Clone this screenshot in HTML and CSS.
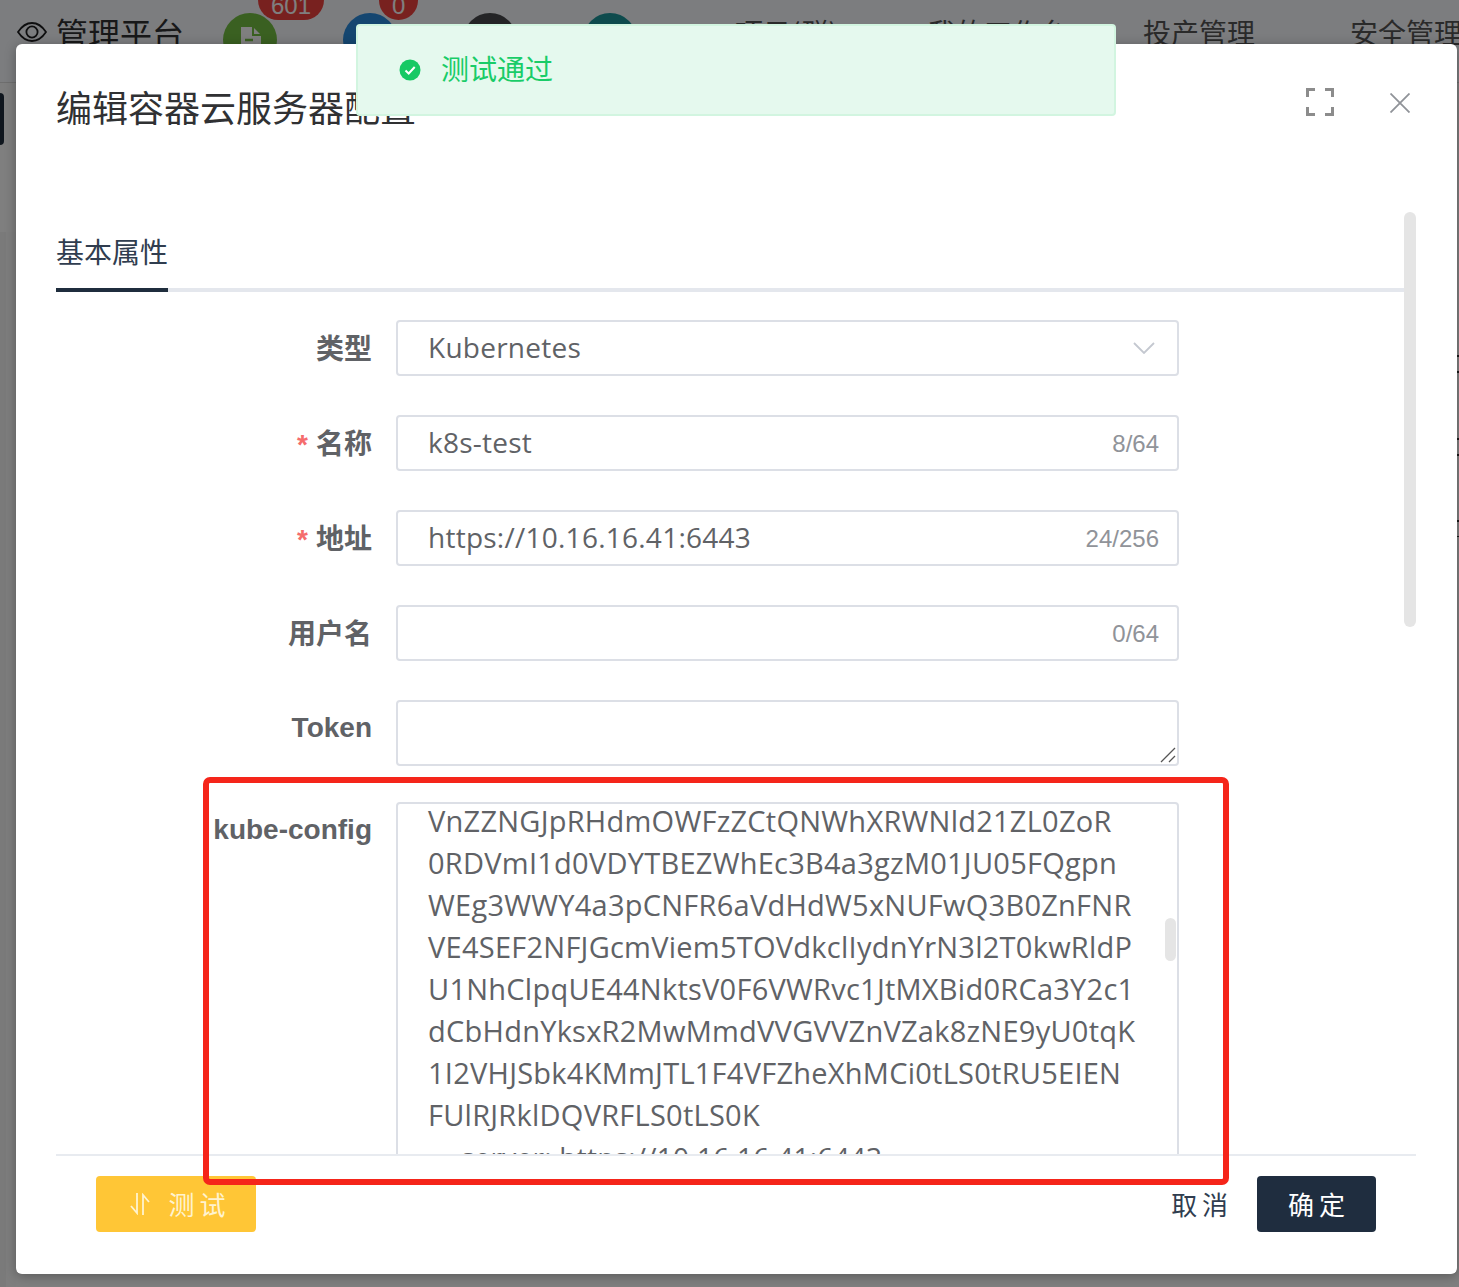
FILE: index.html
```html
<!DOCTYPE html>
<html lang="zh-CN">
<head>
<meta charset="utf-8">
<title>编辑容器云服务器配置</title>
<link rel="stylesheet" href="styles.css">
</head>
<body>
<div class="page">
  <header class="topbar">
    <div class="brand">
      <svg class="brand-eye" viewBox="0.500 0 29 20" width="30" height="20" aria-hidden="true"><path d="M1 10C5 4 10 1 15 1s10 3 14 9c-4 6-9 9-14 9S5 16 1 10z" fill="none" stroke="#1d1d1e" stroke-width="1.8"/><circle cx="15" cy="10" r="5.6" fill="none" stroke="#1d1d1e" stroke-width="1.8"/></svg>
      <span class="brand-name">管理平台</span>
    </div>
    <div class="quick">
      <div class="quick-item green">
        <svg class="doc" viewBox="0 0 22 28" width="22" height="28" aria-hidden="true"><path d="M1 0h12l8 8v20H1z" fill="#fff"/><path d="M13 0v8h8" fill="none" stroke="#74c043" stroke-width="2"/><path d="M5 13h8M5 19h12" stroke="#74c043" stroke-width="2.4"/></svg>
        <span class="badge wide">601</span>
      </div>
      <div class="quick-item blue"><span class="badge">0</span></div>
      <div class="quick-item slate"></div>
      <div class="quick-item teal"></div>
    </div>
    <nav class="nav">
      <span class="nav-item first">项目(群)</span>
      <span class="nav-item second">我的工作台</span>
      <span class="nav-item third">投产管理</span>
      <span class="nav-item">安全管理</span>
    </nav>
  </header>
  <div class="subbar"><span class="pill"></span></div>
  <div class="side"></div>
  <div class="table-edge"></div>
</div>

<div class="mask"></div>

<section class="modal">
  <div class="modal-head">
    <h1 class="modal-title">编辑容器云服务器配置</h1>
    <div class="modal-tools">
      <svg viewBox="0 0 28 28" width="28" height="28" aria-hidden="true"><path d="M1.5 9V1.500H9M19 1.500h7.500V9M1.500 19v7.500H9M19 26.500h7.500V19" fill="none" stroke="#8c8c8c" stroke-width="3"/></svg>
      <svg class="close" viewBox="0 0 20 20" width="20" height="20" aria-hidden="true"><path d="M0.500 0.500l19 19M19.500 0.500l-19 19" fill="none" stroke="#909399" stroke-width="1.800"/></svg>
    </div>
  </div>

  <div class="modal-body">
    <div class="scroll-thumb"></div>
    <div class="tabs"><span class="tab">基本属性</span></div>

    <div class="row">
      <div class="label">类型</div>
      <div class="field">
        <span class="value">Kubernetes</span>
        <svg class="chevron" viewBox="0 0 22 12" width="22" height="12" aria-hidden="true"><path d="M1 1l10 10L21 1" fill="none" stroke="#c4c8d0" stroke-width="1.800"/></svg>
      </div>
    </div>
    <div class="row">
      <div class="label"><span class="req">*</span>名称</div>
      <div class="field"><span class="value">k8s-test</span><span class="count">8/64</span></div>
    </div>
    <div class="row">
      <div class="label"><span class="req">*</span>地址</div>
      <div class="field"><span class="value">https://10.16.16.41:6443</span><span class="count">24/256</span></div>
    </div>
    <div class="row">
      <div class="label">用户名</div>
      <div class="field"><span class="value"></span><span class="count">0/64</span></div>
    </div>
    <div class="row row-token">
      <div class="label latin">Token</div>
      <div class="field area-small">
        <svg class="grip" viewBox="0 0 16 16" width="16" height="16" aria-hidden="true"><path d="M1 15L15 1M9 15l6-6" fill="none" stroke="#555" stroke-width="1.300"/></svg>
      </div>
    </div>
    <div class="row">
      <div class="label latin">kube-config</div>
      <div class="field area-large">
        <div class="code">
          <div class="code-line">VnZZNGJpRHdmOWFzZCtQNWhXRWNld21ZL0ZoR</div>
          <div class="code-line">0RDVmI1d0VDYTBEZWhEc3B4a3gzM01JU05FQgpn</div>
          <div class="code-line">WEg3WWY4a3pCNFR6aVdHdW5xNUFwQ3B0ZnFNR</div>
          <div class="code-line">VE4SEF2NFJGcmViem5TOVdkclIydnYrN3l2T0kwRldP</div>
          <div class="code-line">U1NhClpqUE44NktsV0F6VWRvc1JtMXBid0RCa3Y2c1</div>
          <div class="code-line">dCbHdnYksxR2MwMmdVVGVVZnVZak8zNE9yU0tqK</div>
          <div class="code-line">1I2VHJSbk4KMmJTL1F4VFZheXhMCi0tLS0tRU5EIEN</div>
          <div class="code-line">FUlRJRklDQVRFLS0tLS0K</div>
          <div class="code-line indent">server: https://10.16.16.41:6443</div>
        </div>
        <div class="code-thumb"></div>
      </div>
    </div>
  </div>

  <footer class="modal-foot">
    <button class="btn btn-test" type="button">
      <svg viewBox="0 0 20 22" width="20" height="22" aria-hidden="true"><path d="M7 0v20L1 13M13 22V2l6 7" fill="none" stroke="#fff3cf" stroke-width="1.800"/></svg>
      <span>测 试</span>
    </button>
    <div class="foot-right">
      <button class="btn btn-cancel" type="button">取 消</button>
      <button class="btn btn-ok" type="button">确 定</button>
    </div>
  </footer>
</section>

<div class="toast">
  <svg viewBox="0 0 22 22" width="22" height="22" aria-hidden="true"><circle cx="11" cy="11" r="10.500" fill="#17c964"/><path d="M6.500 11.500l3.200 3 6-6.500" fill="none" stroke="#fff" stroke-width="2"/></svg>
  <span class="toast-text">测试通过</span>
</div>

<div class="annotation"></div>
</body>
</html>
```
FILE: styles.css
```css
* { box-sizing: border-box; }
html, body { margin: 0; height: 1287px; overflow: hidden; }
body {
  position: relative;
  background: #fff;
  font-family: "Open Sans", "Noto Sans CJK SC", sans-serif;
  color: #606266;
}

/* page behind the mask */
.page { position: relative; height: 100%; width: 1459px; overflow: hidden; }
.topbar { display: flex; height: 82px; padding-left: 18px; background: #f8fafe; white-space: nowrap; }
.brand { flex: none; display: flex; align-items: center; height: 64px; gap: 9px; margin-left: -1px; }
.brand-eye { flex: none; }
.brand-name { font-size: 32px; color: #303133; font-family: "Noto Sans CJK SC", sans-serif; }
.quick { flex: none; display: flex; gap: 66px; margin-left: 39px; padding-top: 13px; }
.quick-item { position: relative; width: 54px; height: 54px; border-radius: 50%; }
.green { background: #74c043; }
.blue { background: #2a8ce0; }
.slate { background: #48494c; }
.teal { background: #1c969b; }
.doc { position: absolute; left: 17px; top: 14px; }
.badge {
  position: absolute; left: 36px; top: -33px; height: 40px; min-width: 37px; padding: 0 13px;
  border-radius: 20px; background: #f0433f; color: #fff; font-size: 24px; line-height: 52px;
  text-align: center; font-family: "Liberation Sans", sans-serif;
}
.wide { left: 35px; padding: 0 13px; }
.nav {
  flex: none; display: flex; margin-left: 98px; padding-top: 11px;
  font-size: 28px; line-height: 42px; color: #555; font-family: "Noto Sans CJK SC", sans-serif;
}
.nav-item.first { margin-right: 90px; }
.nav-item.second { margin-right: 75px; }
.nav-item.third { margin-right: 95px; }
.subbar { height: 68px; padding-top: 10px; background: #fafafa; border-top: 1px solid #ddd; }
.pill { display: block; width: 4px; height: 52px; border-radius: 0 4px 4px 0; background: #1f2d3d; }
.side { width: 16px; height: 1055px; margin-top: 82px; background: linear-gradient(90deg, #f4f4f4 6px, #fcfcfc 6px); }
.table-edge {
  position: absolute; right: 0; top: 355px; width: 2px; height: 182px;
  background: repeating-linear-gradient(180deg, #333 0 2px, #fff 2px 16px, #333 16px 18px, #fff 18px 82.500px);
}

.mask { position: absolute; inset: 0; background: rgba(0, 0, 0, 0.5); }

/* modal */
.modal {
  position: absolute; left: 16px; top: 44px; width: 1441px; height: 1230px;
  display: flex; flex-direction: column; padding: 0 41px 0 40px;
  background: #fff; border-radius: 6px; box-shadow: 0 2px 12px rgba(0, 0, 0, 0.3);
}
.modal-head { flex: none; height: 168px; display: flex; justify-content: space-between; align-items: flex-start; }
.modal-title {
  margin: 35px 0 0; font-size: 36px; line-height: 54px; font-weight: 400; color: #303133;
  font-family: "Noto Sans CJK SC", sans-serif;
}
.modal-tools { display: flex; align-items: center; gap: 56px; margin-top: 44px; padding-right: 6px; height: 28px; }
.close { margin-top: 2px; }

.modal-body { position: relative; flex: 1; min-height: 0; overflow: hidden; padding-right: 12px; }
.scroll-thumb { position: absolute; right: 0; top: 0; width: 12px; height: 415px; border-radius: 6px; background: #e5e5e5; }
.tabs { height: 80px; border-bottom: 4px solid #e4e7ed; margin-bottom: 28px; padding-top: 20px; }
.tab {
  display: inline-block; height: 60px; border-bottom: 4px solid #1f2d3d;
  font-size: 28px; line-height: 38px; color: #303d4f; font-family: "Noto Sans CJK SC", sans-serif;
}
.row { display: flex; gap: 24px; margin-bottom: 39px; }
.row-token { margin-bottom: 36px; }
.label {
  flex: none; width: 316px; height: 56px; text-align: right; font-size: 28px; line-height: 54px; font-weight: 700;
  color: #606266; font-family: "Noto Sans CJK SC", sans-serif; white-space: nowrap;
}
.label.latin { line-height: 56px; font-family: "Liberation Sans", sans-serif; }
.req { margin-right: 8px; line-height: 1; color: #f56c6c; font-weight: 700; font-family: "Liberation Sans", sans-serif; font-size: 28px; }
.field {
  position: relative; flex: none; width: 783px; height: 56px; padding: 0 18px 0 30px;
  display: flex; align-items: center; justify-content: space-between;
  border: 2px solid #dcdfe6; border-radius: 4px; background: #fff;
}
.value { margin-top: -2px; font-size: 28px; line-height: 42px; letter-spacing: 0.250px; color: #606266; }
.count { padding-top: 2px; font-size: 24px; color: #909399; font-family: "Liberation Sans", sans-serif; }
.chevron { margin-right: 4px; }
.area-small { height: 66px; }
.grip { position: absolute; right: 1px; bottom: 1px; }
.area-large { display: block; height: 420px; overflow: hidden; }
.code { margin-top: -4px; font-size: 29px; line-height: 42px; letter-spacing: 0.250px; color: #606266; }
.code-line { white-space: pre; }
.indent { padding-left: 33px; font-size: 28px; }
.code-thumb { position: absolute; left: 767px; top: 114px; width: 11px; height: 43px; border-radius: 6px; background: #e5e5e5; }

.modal-foot {
  flex: none; height: 120px; display: flex; justify-content: space-between; align-items: flex-start;
  padding: 20px 40px 0; border-top: 2px solid #e8ebf0;
}
.foot-right { display: flex; gap: 29px; }
.btn {
  height: 56px; border: 0; border-radius: 4px; background: none; padding: 0;
  font-size: 26px; line-height: 36px; word-spacing: -1px; font-family: "Noto Sans CJK SC", sans-serif;
  display: flex; align-items: center; justify-content: center;
}
.btn-test { width: 160px; gap: 19px; padding-left: 3px; background: #ffc636; color: #fff3cf; }
.btn-cancel { color: #303d4f; }
.btn-ok { width: 119px; background: #1f2d3f; color: #fff; }

/* floating */
.toast {
  position: absolute; left: 356px; top: 24px; width: 760px; height: 92px;
  display: flex; align-items: center; gap: 20px; padding: 0 0 1px 41px;
  background: #e5f9ee; border: 2px solid #d2f5e0; border-radius: 4px;
  font-size: 28px; color: #19cc68; font-family: "Noto Sans CJK SC", sans-serif;
}
.toast-text { margin-top: -3px; }
.annotation {
  position: absolute; left: 203px; top: 777px; width: 1026px; height: 408px;
  border: 6px solid #f5251a; border-radius: 7px;
}
```
